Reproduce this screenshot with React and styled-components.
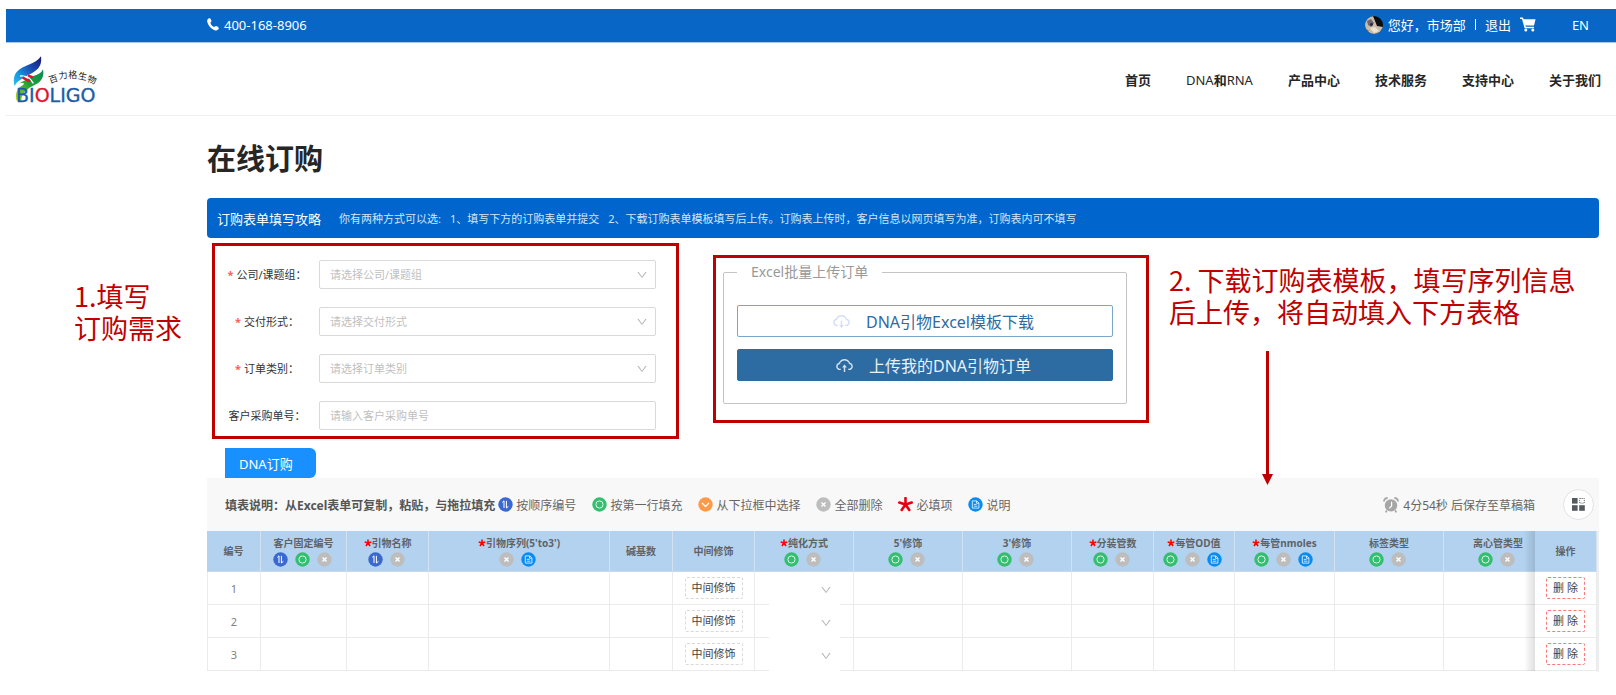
import styled, { createGlobalStyle, css } from 'styled-components';
import {
  AiOutlineCloudDownload,
  AiOutlineCloudUpload,
  AiOutlineDown,
} from 'react-icons/ai';

const navItems = ['首页', 'DNA和RNA', '产品中心', '技术服务', '支持中心', '关于我们'];

const formFields = [
  { id: 'company', label: '公司/课题组', hint: '请选择公司/课题组', required: true, select: true },
  { id: 'delivery', label: '交付形式', hint: '请选择交付形式', required: true, select: true },
  { id: 'category', label: '订单类别', hint: '请选择订单类别', required: true, select: true },
  { id: 'purchase', label: '客户采购单号', hint: '请输入客户采购单号' },
];

const legendItems = [
  { icon: 'sort', text: '按顺序编号' },
  { icon: 'fill', text: '按第一行填充' },
  { icon: 'pick', text: '从下拉框中选择' },
  { icon: 'clear', text: '全部删除' },
  { icon: 'star', text: '必填项' },
  { icon: 'note', text: '说明' },
];

const columns = [
  { key: 'no', title: '编号', width: 54 },
  { key: 'code', title: '客户固定编号', width: 86, actions: ['sort', 'fill', 'clear'] },
  { key: 'name', title: '引物名称', width: 82, required: true, actions: ['sort', 'clear'] },
  { key: 'sequence', title: "引物序列(5'to3')", width: 181, required: true, actions: ['clear', 'note'] },
  { key: 'bases', title: '碱基数', width: 63 },
  { key: 'middle', title: '中间修饰', width: 82 },
  { key: 'purify', title: '纯化方式', width: 99, required: true, actions: ['fill', 'clear'] },
  { key: 'five', title: "5'修饰", width: 109, actions: ['fill', 'clear'] },
  { key: 'three', title: "3'修饰", width: 109, actions: ['fill', 'clear'] },
  { key: 'tubes', title: '分装管数', width: 82, required: true, actions: ['fill', 'clear'] },
  { key: 'od', title: '每管OD值', width: 81, required: true, actions: ['fill', 'clear', 'note'] },
  { key: 'nmoles', title: '每管nmoles', width: 100, required: true, actions: ['fill', 'clear', 'note'] },
  { key: 'tag', title: '标签类型', width: 109, actions: ['fill', 'clear'] },
  { key: 'tubeType', title: '离心管类型', width: 109, actions: ['fill', 'clear'] },
  { key: 'action', title: '操作', width: 62 },
];

const actionNames = {
  sort: '按顺序编号',
  fill: '按第一行填充',
  clear: '全部删除',
  note: '说明',
};

const rows = [1, 2, 3];

function Mark({ type }) {
  if (type === 'star') {
    return (
      <svg width="15" height="15" viewBox="0 0 15 15" aria-hidden="true">
        <path
          d="M7.5 7.5V1M7.5 7.5L1.3 5.6M7.5 7.5L13.7 5.6M7.5 7.5L3.7 13M7.5 7.5L11.3 13"
          stroke="#e60012"
          strokeWidth="2.6"
          strokeLinecap="round"
        />
      </svg>
    );
  }
  const fills = {
    sort: '#3a68cf',
    fill: '#34bf70',
    pick: '#fb9b49',
    clear: '#bdbdbd',
    note: '#0a8bf0',
  };
  return (
    <svg width="15" height="15" viewBox="0 0 15 15" fill="none" aria-hidden="true">
      <circle cx="7.5" cy="7.5" r="7.2" fill={fills[type]} />
      {type === 'sort' && (
        <path d="M4.3 5.4L6 3.8V11M8.4 3.8V11L10.4 9.4" stroke="#fff" strokeWidth="1" />
      )}
      {type === 'fill' && <circle cx="7.5" cy="7.5" r="3.6" stroke="#dff5e8" strokeWidth="1" />}
      {type === 'pick' && <path d="M4 6L7.5 9.5L11 6" stroke="#fff" strokeWidth="1.3" />}
      {type === 'clear' && (
        <path d="M5.5 5.5L9.5 9.5M9.5 5.5L5.5 9.5" stroke="#fff" strokeWidth="1.4" />
      )}
      {type === 'note' && (
        <path
          d="M4.3 3.9H8.8L10.9 6V11.1H4.3ZM8.5 4V6.3H10.8M5.8 7.4H8.6M5.8 9.2H9.4"
          stroke="#d9eeff"
          strokeWidth="0.9"
        />
      )}
    </svg>
  );
}

function RequiredStar() {
  return (
    <svg width="8" height="8" viewBox="0 0 15 15" aria-hidden="true">
      <path
        d="M7.5 7.5V1M7.5 7.5L1.3 5.6M7.5 7.5L13.7 5.6M7.5 7.5L3.7 13M7.5 7.5L11.3 13"
        stroke="#ff0000"
        strokeWidth="3"
      />
    </svg>
  );
}

function Logo() {
  return (
    <LogoSvg width="86" height="47" viewBox="42 32 258 141" role="img" aria-label="百力格生物 BIOLIGO">
      <defs>
        <linearGradient id="leafTop" x1="1" y1="0" x2="0" y2="1">
          <stop offset="0" stopColor="#1b1472" />
          <stop offset="0.4" stopColor="#1c4fb5" />
          <stop offset="0.75" stopColor="#159fe4" />
          <stop offset="1" stopColor="#2fc0ee" />
        </linearGradient>
        <linearGradient id="leafBottom" x1="1" y1="0" x2="0" y2="1">
          <stop offset="0" stopColor="#0a8a55" />
          <stop offset="0.5" stopColor="#1fa136" />
          <stop offset="1" stopColor="#b5dc1c" />
        </linearGradient>
      </defs>
      <path
        d="M123 33C106 58 70 58 50 80C40 92 40 108 44 122C50 108 62 102 76 94C104 80 128 70 123 33Z"
        fill="url(#leafTop)"
      />
      <path
        d="M129 72C120 92 100 88 84 100L58 114C70 112 74 112 70 118C50 128 44 148 50 166L64 168C64 146 78 132 98 122C122 112 134 98 129 72Z"
        fill="url(#leafBottom)"
      />
      <path d="M60 92C76 90 92 98 100 114" stroke="#fff" strokeWidth="4" fill="none" />
      <path d="M68 97L90 108M84 90L98 96" stroke="#dd1430" strokeWidth="7" />
      <g fill="#222" fontFamily="'Noto Sans CJK SC', sans-serif" fontSize="27" textAnchor="middle">
        <text transform="translate(163 110) rotate(-18)">百</text>
        <text transform="translate(190 100) rotate(-8)">力</text>
        <text transform="translate(218 97)">格</text>
        <text transform="translate(246 102) rotate(12)">生</text>
        <text transform="translate(272 112) rotate(22)">物</text>
      </g>
      <text
        x="48"
        y="170"
        fill="#1a5ba8"
        stroke="#1a5ba8"
        fontFamily="'DejaVu Sans', sans-serif"
        fontSize="57"
      >
        BI<tspan fill="#dd1430" stroke="#dd1430">O</tspan>LIGO
      </text>
    </LogoSvg>
  );
}

function PhoneIcon() {
  return (
    <svg width="12" height="13" viewBox="0 0 12 13" fill="#fff" aria-hidden="true">
      <path d="M2.4 0.3C3.4 0.1 4.3 2 4.5 3C4.6 3.8 3.4 4.2 3.5 4.9C3.8 6.5 5.4 8.3 7 8.9C7.8 9.1 8.1 7.9 8.9 8C10 8.2 11.9 9.3 11.8 10.3C11.6 11.9 9.8 12.8 8.4 12.4C4.4 11.2 0.9 7.2 0.2 3.4C0 1.9 1 0.5 2.4 0.3Z" />
    </svg>
  );
}

function CartIcon() {
  return (
    <svg width="16" height="15" viewBox="0 0 16 15" fill="#fff" aria-hidden="true">
      <path d="M0 0.5H3L3.6 2.3H15.6L14 8.6H5.4L5.8 9.8H14V11.2H4.6L2 2H0Z" />
      <circle cx="5.8" cy="13" r="1.5" />
      <circle cx="12.8" cy="13" r="1.5" />
    </svg>
  );
}

function Avatar() {
  return (
    <svg width="18" height="18" viewBox="0 0 18 18" aria-hidden="true">
      <defs>
        <clipPath id="face">
          <circle cx="9" cy="9" r="9" />
        </clipPath>
      </defs>
      <g clipPath="url(#face)">
        <rect width="18" height="18" fill="#0d0c0e" />
        <path d="M0 4L4 0H8L10 5L12 10L18 11V18H0Z" fill="#c9bda9" />
        <path d="M2 5L6 3L9 7L6 11L3 9Z" fill="#6e6774" />
        <path d="M5 12L10 11L14 15L9 17Z" fill="#ece2cd" />
        <circle cx="6.5" cy="8.5" r="1.4" fill="#2c2430" />
        <path d="M1 13L4 15L2 17Z" fill="#5d5040" />
      </g>
    </svg>
  );
}

function ClockIcon() {
  return (
    <svg width="16" height="16" viewBox="0 0 16 16" fill="none" aria-hidden="true">
      <circle cx="8" cy="8.4" r="6.2" fill="#a6a6a6" />
      <path d="M8.6 4.8V9L6.2 11.4" stroke="#fff" strokeWidth="1.2" />
      <path d="M1 4.4C1 2.4 2.4 1 4.6 1M15 4.4C15 2.4 13.6 1 11.4 1" stroke="#a6a6a6" strokeWidth="1.8" />
      <path d="M3.8 13.4L2.8 15.4M12.2 13.4L13.2 15.4" stroke="#a6a6a6" strokeWidth="1.8" />
    </svg>
  );
}

function GridIcon() {
  return (
    <svg width="13" height="13" viewBox="0 0 13 13" fill="#555a60" aria-hidden="true">
      <rect width="5.6" height="5.6" />
      <rect y="7.2" width="5.6" height="5.6" />
      <rect x="7.2" y="7.2" width="5.6" height="5.6" />
      <rect x="7.7" y="0.5" width="4.6" height="4.6" fill="none" stroke="#555a60" strokeDasharray="1 1" />
    </svg>
  );
}

function FormField({ field }) {
  return (
    <FormRow>
      <FieldLabel htmlFor={field.id}>
        {field.required && <Asterisk>*</Asterisk>}
        {field.label}：
      </FieldLabel>
      {field.select ? (
        <SelectWrap>
          <Select id={field.id} defaultValue="">
            <option value="">{field.hint}</option>
          </Select>
          <AiOutlineDown />
        </SelectWrap>
      ) : (
        <TextInput id={field.id} placeholder={field.hint} />
      )}
    </FormRow>
  );
}

function Cell({ column, row }) {
  if (column.key === 'no') return row;
  if (column.key === 'middle') return <CellButton>中间修饰</CellButton>;
  if (column.key === 'action') return <CellButton $danger>删 除</CellButton>;
  if (column.key === 'purify') {
    return (
      <PurifyWrap>
        <PurifySelect aria-label={`纯化方式 ${row}`} />
        <AiOutlineDown />
      </PurifyWrap>
    );
  }
  return null;
}

export default function App() {
  return (
    <>
      <GlobalStyle />
      <Page>
        <TopBar>
          <Phone>
            <PhoneIcon />
            400-168-8906
          </Phone>
          <Account>
            <Avatar />
            <Greeting>您好，市场部</Greeting>
            <Divider />
            <TopLink href="#logout">退出</TopLink>
            <CartLink href="#cart" aria-label="购物车">
              <CartIcon />
            </CartLink>
            <TopLink href="#en">EN</TopLink>
          </Account>
        </TopBar>
        <Header>
          <Logo />
          <Nav>
            {navItems.map((item) => (
              <NavLink key={item} href="#nav">
                {item.split(/([A-Z]+)/).map((part, index) =>
                  /[A-Z]/.test(part) ? <Latin key={index}>{part}</Latin> : part
                )}
              </NavLink>
            ))}
          </Nav>
        </Header>
        <Content>
          <Title>在线订购</Title>
          <Banner>
            <strong>订购表单填写攻略</strong>
            <p>
              <span>你有两种方式可以选:</span>
              <span>1、填写下方的订购表单并提交</span>
              <span>
                2、下载订购表单模板填写后上传。订购表上传时，客户信息以网页填写为准，订购表内可不填写
              </span>
            </p>
          </Banner>
        </Content>
        <Steps>
          <FirstNote>
            1.填写
            <br />
            订购需求
          </FirstNote>
          <FormBox>
            {formFields.map((field) => (
              <FormField key={field.id} field={field} />
            ))}
          </FormBox>
          <UploadBox>
            <UploadGroup>
              <legend>Excel批量上传订单</legend>
              <UploadButton>
                <AiOutlineCloudDownload />
                DNA引物Excel模板下载
              </UploadButton>
              <UploadButton $primary>
                <AiOutlineCloudUpload />
                上传我的DNA引物订单
              </UploadButton>
            </UploadGroup>
          </UploadBox>
          <SecondNote>
            2. 下载订购表模板，填写序列信息
            <br />
            后上传，将自动填入下方表格
            <Arrow width="11" height="134" viewBox="0 0 11 134" aria-hidden="true">
              <path d="M4 0H7V123H11L5.5 134L0 123H4Z" fill="#c00000" />
            </Arrow>
          </SecondNote>
        </Steps>
        <Content>
          <Tab>DNA订购</Tab>
          <Toolbar>
            <Hint>填表说明：从Excel表单可复制，粘贴，与拖拉填充</Hint>
            <Legend>
              {legendItems.map((item) => (
                <li key={item.text}>
                  <Mark type={item.icon} />
                  {item.text}
                </li>
              ))}
            </Legend>
            <Countdown>
              <ClockIcon />
              4分54秒 后保存至草稿箱
            </Countdown>
            <RoundButton aria-label="列设置">
              <GridIcon />
            </RoundButton>
          </Toolbar>
          <TableScroll>
            <Table>
              <colgroup>
                {columns.map((column) => (
                  <col key={column.key} width={column.width} />
                ))}
              </colgroup>
              <thead>
                <tr>
                  {columns.map((column) => (
                    <HeadCell key={column.key} $fixed={column.key === 'action'}>
                      <HeadLabel>
                        {column.required && <RequiredStar />}
                        {column.title}
                      </HeadLabel>
                      {column.actions && (
                        <HeadActions>
                          {column.actions.map((action) => (
                            <IconButton key={action} aria-label={actionNames[action]}>
                              <Mark type={action} />
                            </IconButton>
                          ))}
                        </HeadActions>
                      )}
                    </HeadCell>
                  ))}
                </tr>
              </thead>
              <tbody>
                {rows.map((row) => (
                  <tr key={row}>
                    {columns.map((column) => (
                      <BodyCell key={column.key} $fixed={column.key === 'action'}>
                        <Cell column={column} row={row} />
                      </BodyCell>
                    ))}
                  </tr>
                ))}
              </tbody>
            </Table>
          </TableScroll>
        </Content>
      </Page>
    </>
  );
}

const GlobalStyle = createGlobalStyle`
  * {
    box-sizing: border-box;
  }

  body {
    margin: 0;
    background: #fff;
    color: #333;
    font-family: 'Noto Sans', 'Noto Sans CJK SC', sans-serif;
    font-size: 13px;
  }

  button, input, select {
    margin: 0;
    padding: 0;
    font-family: inherit;
  }

  svg {
    flex-shrink: 0;
  }
`;

const Page = styled.div`
  padding: 9px 0 16px;
`;

const TopBar = styled.div`
  display: flex;
  justify-content: space-between;
  align-items: center;
  height: 34px;
  margin-left: 6px;
  padding: 0 27px 2px 201px;
  border-bottom: 1px solid #a9c9ec;
  background: #0766c6;
  color: #fff;
`;

const Phone = styled.div`
  display: flex;
  align-items: center;
  gap: 5px;
`;

const Account = styled.div`
  display: flex;
  align-items: center;
`;

const Greeting = styled.span`
  margin-left: 5px;
`;

const Divider = styled.span`
  width: 1px;
  height: 11px;
  margin: 0 9px;
  background: #fff;
`;

const TopLink = styled.a`
  color: inherit;
  text-decoration: none;
`;

const CartLink = styled(TopLink)`
  display: flex;
  margin: 0 36px 0 9px;
`;

const Header = styled.header`
  display: flex;
  justify-content: space-between;
  align-items: center;
  height: 73px;
  margin-left: 6px;
  padding: 0 15px 0 8px;
  border-bottom: 1px solid #f0f0f0;
`;

const LogoSvg = styled.svg`
  overflow: visible;
`;

const Nav = styled.nav`
  display: flex;
  gap: 35px;
`;

const NavLink = styled.a`
  color: #262626;
  font-weight: 700;
  text-decoration: none;
`;

const Latin = styled.span`
  font-weight: 400;
`;

const Content = styled.div`
  margin: 0 17px 0 207px;
`;

const Title = styled.h1`
  margin: 0;
  padding: 25px 0 21px;
  color: #262626;
  font-size: 29px;
  line-height: 36px;
`;

const Banner = styled.div`
  display: flex;
  align-items: center;
  gap: 18px;
  height: 40px;
  padding: 0 10px;
  border-radius: 4px;
  background: #0065cc;
  color: #fff;

  strong {
    font-weight: 400;
  }

  p {
    display: flex;
    gap: 9px;
    margin: 0;
    color: #d3e5f7;
    font-size: 11px;
  }
`;

const Steps = styled.section`
  display: grid;
  grid-template-columns: 192px minmax(0, 467fr) minmax(0, 450fr) minmax(0, 447fr);
  column-gap: 20px;
  align-items: start;
  padding: 5px 0 9px;
`;

const Note = styled.p`
  margin: 0;
  color: #c00000;
  font-family: 'Noto Sans CJK SC', sans-serif;
  font-size: 27px;
  line-height: 32px;
`;

const FirstNote = styled(Note)`
  padding: 37px 0 0 74px;
`;

const SecondNote = styled(Note)`
  position: relative;
  padding-top: 21px;
  white-space: nowrap;
`;

const Arrow = styled.svg`
  position: absolute;
  top: 108px;
  left: 93px;
`;

const FormBox = styled.form`
  display: grid;
  gap: 18px;
  padding: 14px 20px 6px 0;
  border: 3px solid #c00000;
`;

const FormRow = styled.div`
  display: grid;
  grid-template-columns: 104px 1fr;
  align-items: center;
`;

const FieldLabel = styled.label`
  font-size: 11px;
  line-height: 16px;
  text-align: center;
`;

const Asterisk = styled.span`
  margin-right: 3px;
  color: #ff5c5c;
  font-weight: 700;
`;

const fieldBox = css`
  width: 100%;
  height: 29px;
  padding: 0 10px;
  border: 1px solid #d9d9d9;
  border-radius: 2px;
  background: #fff;
  font-size: 11px;
`;

const SelectWrap = styled.div`
  position: relative;

  svg {
    position: absolute;
    top: 9px;
    right: 8px;
    width: 12px;
    height: 12px;
    color: #b3b3b3;
    pointer-events: none;
  }
`;

const Select = styled.select`
  ${fieldBox}
  display: block;
  appearance: none;
  color: #bfbfbf;
`;

const TextInput = styled.input`
  ${fieldBox}

  &::placeholder {
    color: #bfbfbf;
  }
`;

const UploadBox = styled.div`
  margin: 12px 0 0 14px;
  padding: 4px 19px 16px 7px;
  border: 3px solid #c00000;
`;

const UploadGroup = styled.fieldset`
  display: grid;
  gap: 12px;
  min-width: 0;
  margin: 0;
  padding: 23px 13px 22px;
  border: 1px solid #c4c4c4;
  border-radius: 2px;

  legend {
    padding: 0 14px;
    color: #999;
    font-size: 14px;
    line-height: 20px;
  }
`;

const UploadButton = styled.button`
  display: flex;
  justify-content: center;
  align-items: center;
  gap: 15px;
  height: 32px;
  padding-left: 16px;
  border: 1px solid ${({ $primary }) => ($primary ? '#2d6ca3' : '#7ba6cb')};
  border-radius: 2px;
  background: ${({ $primary }) => ($primary ? '#2d6ca3' : '#fff')};
  color: ${({ $primary }) => ($primary ? '#e9f0f6' : '#2d6ca3')};
  font-size: 16px;

  svg {
    width: 19px;
    height: 19px;
    color: ${({ $primary }) => ($primary ? '#d5e2ee' : '#d3def0')};
  }
`;

const Tab = styled.button`
  display: block;
  width: 91px;
  height: 30px;
  margin-left: 18px;
  padding-left: 14px;
  border: none;
  border-radius: 0 6px 6px 0;
  background: #1890ff;
  color: #fff;
  font-size: 13px;
  text-align: left;
`;

const Toolbar = styled.div`
  display: flex;
  align-items: center;
  height: 53px;
  padding: 0 5px 0 18px;
  background: #f8f8f8;
  color: #666;
  font-size: 12px;
  white-space: nowrap;
`;

const Hint = styled.strong`
  margin-right: 3px;
  color: #555;
`;

const Legend = styled.ul`
  display: flex;
  gap: 16px;
  margin: 0;
  padding: 0;
  list-style: none;

  li {
    display: flex;
    align-items: center;
    gap: 3px;
  }
`;

const Countdown = styled.div`
  display: flex;
  align-items: center;
  gap: 4px;
  margin: 0 28px 0 auto;
`;

const RoundButton = styled.button`
  display: flex;
  justify-content: center;
  align-items: center;
  width: 31px;
  height: 31px;
  border: 1px solid #e2e2e8;
  border-radius: 50%;
  background: #fff;
`;

const TableScroll = styled.div`
  overflow: hidden;
  padding-bottom: 1px;
  border-right: 2px solid #eee;
`;

// a little wider than the page, the last column stays pinned over the rest
const Table = styled.table`
  width: calc(100% + 18px);
  border-spacing: 0;
  table-layout: fixed;
`;

const pinned = css`
  position: sticky;
  right: 0;
  z-index: 1;

  &::before {
    content: '';
    position: absolute;
    top: 0;
    bottom: -1px;
    left: -11px;
    width: 11px;
    background: linear-gradient(to right, rgba(0, 0, 0, 0), rgba(0, 0, 0, 0.12));
  }
`;

const HeadCell = styled.th`
  height: 41px;
  padding: 0;
  border-right: 1px solid #d3e2f0;
  border-bottom: 1px solid #c6d9ec;
  background: #b2d2f0;
  color: #5f6368;
  font-size: 10px;
  ${({ $fixed }) => $fixed && pinned}
`;

const HeadLabel = styled.div`
  display: flex;
  justify-content: center;
  align-items: center;
  line-height: 14px;
`;

const HeadActions = styled.div`
  display: flex;
  justify-content: center;
  gap: 7px;
  padding: 2px 3px 0 0;
`;

const IconButton = styled.button`
  display: flex;
  border: none;
  background: none;
`;

const BodyCell = styled.td`
  height: 33px;
  padding: 0;
  border-right: 1px solid #ebebeb;
  border-bottom: 1px solid #ebebeb;
  background: #fff;
  color: #808080;
  font-size: 11px;
  text-align: center;

  &:first-child {
    border-left: 1px solid #ebebeb;
  }
  ${({ $fixed }) => $fixed && pinned}
`;

const CellButton = styled.button`
  height: 22px;
  padding: 0 6px;
  border: 1px dashed ${({ $danger }) => ($danger ? '#ff7875' : '#d9d9d9')};
  border-radius: 2px;
  background: #fff;
  color: #444;
  font-size: 11px;
  line-height: 20px;
`;

const PurifyWrap = styled(SelectWrap)`
  width: 71px;
  margin: 0 auto -1px;

  svg {
    top: 12px;
  }
`;

const PurifySelect = styled.select`
  display: block;
  width: 100%;
  height: 33px;
  border: none;
  background: #fff;
  appearance: none;
`;
